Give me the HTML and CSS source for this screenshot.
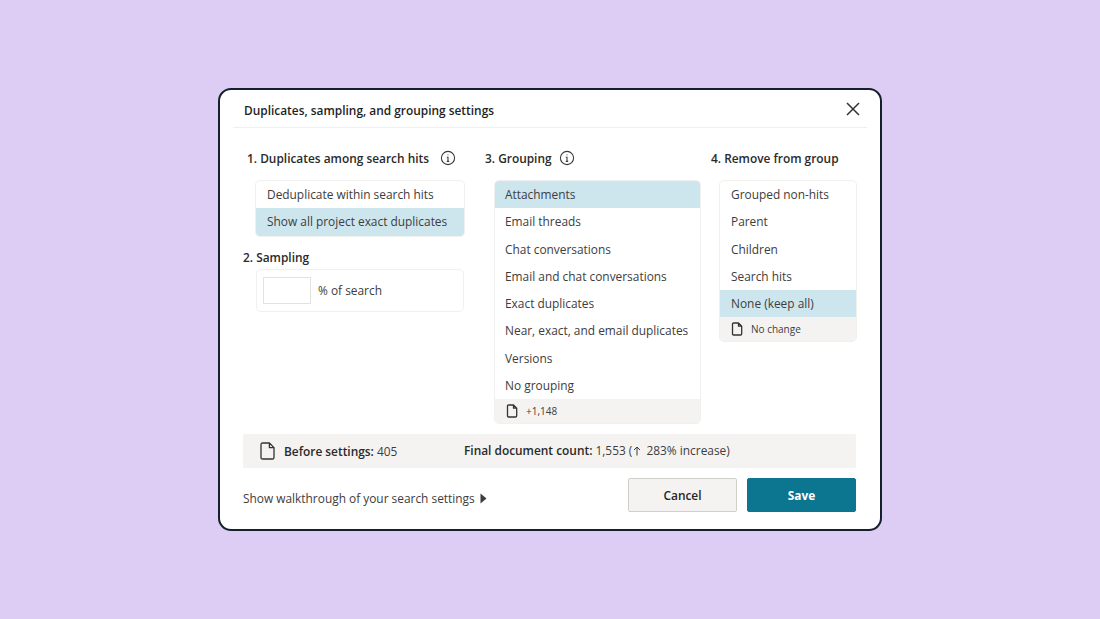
FILE: index.html
```html
<!DOCTYPE html>
<html lang="en">
<head>
<meta charset="utf-8">
<title>Duplicates, sampling, and grouping settings</title>
<link rel="stylesheet" href="styles.css">
</head>
<body>
<main class="modal">
  <header class="modal-head">
    <h1 class="modal-title">Duplicates, sampling, and grouping settings</h1>
    <svg class="close" viewBox="0 0 14 14" width="14" height="14"><path d="M1 1 13 13M13 1 1 13"/></svg>
  </header>
  <div class="columns">
    <section class="col col-one">
      <h2 class="label label-indent">1. Duplicates among search hits<svg class="info info-wide" viewBox="0 0 16 16" width="16" height="16"><circle cx="8" cy="8" r="6.6"/><path d="M6.8 7.3H8V11.4M6.8 11.4H9.2M8 4.5V5.3"/></svg></h2>
      <ul class="list">
        <li class="row">Deduplicate within search hits</li>
        <li class="row selected">Show all project exact duplicates</li>
      </ul>
      <h2 class="label label-sampling">2. Sampling</h2>
      <div class="sample-box">
        <div class="sample-input"></div>
        <span>% of search</span>
      </div>
    </section>
    <section class="col col-two">
      <h2 class="label">3. Grouping<svg class="info" viewBox="0 0 16 16" width="16" height="16"><circle cx="8" cy="8" r="6.6"/><path d="M6.8 7.3H8V11.4M6.8 11.4H9.2M8 4.5V5.3"/></svg></h2>
      <ul class="list">
        <li class="row selected">Attachments</li>
        <li class="row">Email threads</li>
        <li class="row">Chat conversations</li>
        <li class="row">Email and chat conversations</li>
        <li class="row">Exact duplicates</li>
        <li class="row">Near, exact, and email duplicates</li>
        <li class="row">Versions</li>
        <li class="row">No grouping</li>
        <li class="foot">
          <svg class="doc" viewBox="0 0 12 14" width="12" height="14"><path d="M1.5 2.2Q1.5 1 2.7 1H7.5L10.7 4.2V11.8Q10.7 13 9.5 13H2.7Q1.5 13 1.5 11.8ZM7.5 1V4.2H10.7"/></svg>
          <span>+1,148</span>
        </li>
      </ul>
    </section>
    <section class="col col-three">
      <h2 class="label">4. Remove from group</h2>
      <ul class="list">
        <li class="row">Grouped non-hits</li>
        <li class="row">Parent</li>
        <li class="row">Children</li>
        <li class="row">Search hits</li>
        <li class="row selected">None (keep all)</li>
        <li class="foot">
          <svg class="doc" viewBox="0 0 12 14" width="12" height="14"><path d="M1.5 2.2Q1.5 1 2.7 1H7.5L10.7 4.2V11.8Q10.7 13 9.5 13H2.7Q1.5 13 1.5 11.8ZM7.5 1V4.2H10.7"/></svg>
          <span>No change</span>
        </li>
      </ul>
    </section>
  </div>
  <div class="summary">
    <div class="summary-before">
      <svg class="doc doc-large" viewBox="0 0 15 18" width="15" height="18"><path d="M1 2.6Q1 1 2.6 1H9.4L14 5.6V15.4Q14 17 12.4 17H2.6Q1 17 1 15.4ZM9.4 1V5.6H14"/></svg>
      <span><b>Before settings:</b> 405</span>
    </div>
    <div class="summary-final"><b>Final document count:</b> 1,553 (<svg class="arrow" viewBox="0 0 8 10" width="8" height="10"><path d="M4 9.5V1M1 4 4 1 7 4"/></svg> 283% increase)</div>
  </div>
  <footer class="modal-foot">
    <div class="walkthrough">Show walkthrough of your search settings <svg class="caret" viewBox="0 0 7 11" width="7" height="11"><path d="M0.5 0.5 6.5 5.5 0.5 10.5Z"/></svg></div>
    <div class="actions">
      <button class="btn btn-cancel" type="button">Cancel</button>
      <button class="btn btn-save" type="button">Save</button>
    </div>
  </footer>
</main>
</body>
</html>
```
FILE: styles.css
```css
* { box-sizing: border-box; }
html, body { height: 100%; }
body {
  margin: 0;
  padding-top: 88px;
  background: #ddcdf5;
  font-family: "Open Sans", "Liberation Sans", sans-serif;
  font-size: 11.9px;
  color: #2b2b2b;
}
.modal {
  width: 664px;
  height: 443px;
  margin-left: 218px;
  padding: 0 13px 16px;
  background: #fff;
  border: 2px solid #14202e;
  border-radius: 13px;
}
.modal-head {
  height: 38px;
  padding: 2px 7px 0 11px;
  display: flex;
  align-items: center;
  justify-content: space-between;
  border-bottom: 1px solid #efefef;
}
.modal-title { margin: 0; font-size: 11.9px; font-weight: 600; color: #1f1f1f; }
.close { fill: none; stroke: #333; stroke-width: 1.5; margin-top: -2px; }
.columns {
  display: grid;
  grid-template-columns: 242px 226px 146px;
  margin: 20px 10px 0;
  height: 276px;
}
.label {
  margin: 0;
  height: 20px;
  display: flex;
  align-items: center;
  font-size: 11.9px;
  font-weight: 600;
  color: #2a2a2a;
  white-space: nowrap;
}
.label-indent { padding-left: 4px; }
.label-sampling { margin-top: 10.5px; }
.info { margin-left: 7px; fill: none; stroke: #3a3a3a; stroke-width: 1.1; }
.info-wide { margin-left: 11px; }
.list {
  list-style: none;
  margin: 12px 0 0;
  padding: 0;
  border: 1px solid #f0f0ee;
  border-radius: 5px;
  overflow: hidden;
}
.col-one .list { margin-left: 12px; width: 210px; }
.sample-box { margin-left: 13px; width: 208px; }
.col-two .list { margin-left: 9px; width: 207px; }
.col-three .list { margin-left: 8px; width: 138px; }
.row {
  height: 27.25px;
  padding: 0 0 1px 10px;
  display: flex;
  align-items: center;
  color: #3d3d3d;
  white-space: nowrap;
}
.col-one .row, .col-three .row { padding-left: 11px; }
.selected { background: #cde6ee; }
.foot {
  height: 24.1px;
  padding-left: 11px;
  display: flex;
  align-items: center;
  gap: 8px;
  background: #f4f3f1;
  font-size: 10px;
  color: #3d3d3d;
}
.doc { fill: none; stroke: #333; stroke-width: 1.3; stroke-linejoin: round; flex: none; }
.sample-box {
  height: 43px;
  margin-top: 2px;
  padding: 0 0 1px 6px;
  display: flex;
  align-items: center;
  gap: 7px;
  border: 1px solid #f0f0ee;
  border-radius: 5px;
  color: #3d3d3d;
}
.sample-input { width: 48px; height: 27px; border: 1px solid #e2e2e2; }
.summary {
  height: 34px;
  margin: 10px 11px 0 10px;
  padding-left: 17px;
  display: flex;
  align-items: center;
  background: #f4f3f1;
  border-radius: 2px;
  color: #3d3d3d;
}
.summary b { font-weight: 600; color: #2a2a2a; }
.summary-before { width: 204px; display: flex; align-items: center; gap: 9px; }
.summary-final { margin-top: -2px; white-space: nowrap; }
.arrow { fill: none; stroke: #3d3d3d; stroke-width: 1; vertical-align: -1px; margin: 0 2px 0 1px; }
.modal-foot {
  margin: 10px 11px 0 10px;
  display: flex;
  justify-content: space-between;
  align-items: center;
}
.walkthrough { display: flex; align-items: center; white-space: pre; color: #3d3d3d; margin-top: 6px; }
.caret { fill: #3d3d3d; margin-left: 2px; }
.actions { display: flex; gap: 10px; }
.btn {
  width: 109px;
  height: 34px;
  padding: 0;
  border-radius: 2px;
  font-family: inherit;
  font-size: 11.9px;
  font-weight: 600;
}
.btn-cancel { background: #f4f3f1; border: 1px solid #cfcfcb; color: #262626; }
.btn-save { background: #0c758f; border: 1px solid #0c758f; color: #fff; font-weight: 700; }
```
